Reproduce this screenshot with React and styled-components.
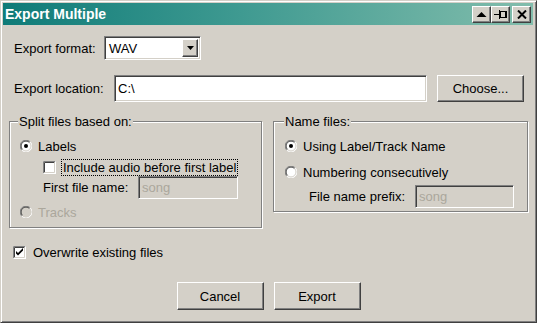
import React, { useState } from 'react';
import styled, { createGlobalStyle, css } from 'styled-components';

const Global = createGlobalStyle`
  html, body {
    margin: 0;
    padding: 0;
    background: #d4d0c8;
  }

  body {
    font-family: "Liberation Sans", Arial, sans-serif;
    font-size: 13px;
    color: #000;
  }
`

const raised = css`
  border: 1px solid;
  border-color: #fff #404040 #404040 #fff;
  box-shadow: inset -1px -1px #808080;
  background: #d4d0c8;
`

const sunken = css`
  border: 1px solid;
  border-color: #808080 #fff #fff #808080;
  box-shadow: inset 1px 1px #404040, inset -1px -1px #d4d0c8;
`

const Window = styled.div`
  width: 537px;
  height: 323px;
  box-sizing: border-box;
  display: flex;
  flex-direction: column;

  padding: 2px 3px 2px 2px;

  border: 1px solid;
  border-color: #d4d0c8 #404040 #404040 #d4d0c8;
  box-shadow: inset 1px 1px #fff, inset -1px -1px #808080;
  background: #d4d0c8;
`

const TitleBar = styled.div`
  height: 22px;
  display: flex;
  align-items: center;
  padding: 0 2px 0 2px;

  background: linear-gradient(90deg, #0f7b78 0%, #3f9a91 45%, #82bdac 100%);
  color: #fff;
  font-size: 14px;
  font-weight: bold;
`

const Title = styled.div`
  flex: 1;
`

const CaptionButton = styled.div`
  ${raised}
  box-sizing: border-box;
  width: 19px;
  height: 17px;
  display: flex;
  align-items: center;
  justify-content: center;
  margin-left: ${p => p.gap || 0}px;
`

const Body = styled.div`
  display: flex;
  flex-direction: column;
  padding: 0 5px 0 6px;
`

const Row = styled.div`
  display: flex;
  align-items: center;
  height: ${p => p.h || 20}px;
  margin-top: ${p => p.mt || 0}px;
  padding-left: ${p => p.pl || 0}px;
  padding-right: ${p => p.pr || 0}px;
  white-space: nowrap;
  color: ${p => (p.disabled ? '#aba79c' : '#000')};
`

const Label = styled.span`
  display: inline-block;
  width: ${p => (p.w ? `${p.w}px` : 'auto')};
  flex: none;
`

const Select = styled.div`
  ${sunken}
  box-sizing: border-box;
  width: 97px;
  height: 24px;
  display: flex;
  align-items: center;
  padding: 2px;
  background: #fff;
`

const SelectValue = styled.div`
  flex: 1;
  padding-left: 2px;
`

const SelectArrow = styled.div`
  ${raised}
  box-sizing: border-box;
  width: 16px;
  height: 100%;
  display: flex;
  align-items: center;
  justify-content: center;
`

const TextBox = styled.div`
  ${sunken}
  box-sizing: border-box;
  height: ${p => p.h || 23}px;
  width: ${p => (p.w ? `${p.w}px` : 'auto')};
  flex: ${p => (p.w ? 'none' : 1)};
  display: flex;
  align-items: center;
  padding-left: 3px;
  background: ${p => (p.disabled ? '#d4d0c8' : '#fff')};
  color: ${p => (p.disabled ? '#aba79c' : '#000')};
`

const Button = styled.button`
  ${raised}
  box-sizing: border-box;
  width: 87px;
  height: ${p => p.h || 28}px;
  margin-left: ${p => p.ml || 0}px;
  padding: 0;
  font: inherit;
  color: #000;
`

const GroupRow = styled.div`
  display: flex;
  align-items: flex-start;
  gap: 11px;
  margin-top: 19px;
`

const Group = styled.div`
  display: flex;
  flex-direction: column;
  width: ${p => (p.w ? `${p.w}px` : 'auto')};
  flex: ${p => (p.w ? 'none' : 1)};
  padding-bottom: ${p => p.pb || 0}px;

  border: 1px solid #808080;
  box-shadow: inset 1px 1px #fff, 1px 1px #fff;
`

const Legend = styled.div`
  align-self: flex-start;
  margin: -8px 0 0 ${p => p.ml || 8}px;
  padding: 0 1px;
  line-height: 15px;
  background: #d4d0c8;
`

const Focus = styled.span`
  outline: 1px dotted #000;
  outline-offset: 0;
  padding: 0 1px;
  line-height: 15px;
`

const Gap = styled.span`
  display: inline-block;
  width: ${p => p.w}px;
  flex: none;
`

const ButtonRow = styled.div`
  display: flex;
  justify-content: center;
  gap: 10px;
  margin-top: 20px;
`

const Radio = ({ checked, disabled }) => (
  <svg width="12" height="12" viewBox="0 0 12 12" style={{ flex: 'none' }}>
    <circle cx="6" cy="6" r="5.5" fill={disabled ? '#d4d0c8' : '#fff'} stroke="none" />
    <path d="M1.8 10.2 A5.5 5.5 0 0 1 10.2 1.8" fill="none" stroke="#808080" />
    <path d="M10.2 1.8 A5.5 5.5 0 0 1 1.8 10.2" fill="none" stroke="#fff" />
    <path d="M2.5 9.5 A4.5 4.5 0 0 1 9.5 2.5" fill="none" stroke="#404040" />
    <path d="M9.5 2.5 A4.5 4.5 0 0 1 2.5 9.5" fill="none" stroke="#d4d0c8" />
    {checked && <circle cx="6" cy="6" r="2" fill="#000" />}
  </svg>
)

const Check = ({ checked }) => (
  <svg width="13" height="13" viewBox="0 0 13 13" style={{ flex: 'none' }}>
    <rect x="0" y="0" width="13" height="13" fill="#fff" />
    <path d="M0.5 12.5 V0.5 H12.5" fill="none" stroke="#808080" />
    <path d="M1.5 11.5 V1.5 H11.5" fill="none" stroke="#404040" />
    <path d="M0.5 12.5 H12.5 V0.5" fill="none" stroke="#fff" />
    <path d="M1.5 11.5 H11.5 V1.5" fill="none" stroke="#d4d0c8" />
    {checked && <path d="M3 5 v2.5 l2 2 l5 -5 v-2.5 l-5 5 z" fill="#000" />}
  </svg>
)

export default props => {
  const [ overwrite, setOverwrite ] = useState(true);
  const [ naming, setNaming ] = useState('label');

  return (
    <Window>
      <Global />
      <TitleBar>
        <Title>Export Multiple</Title>
        <CaptionButton>
          <svg width="11" height="7" viewBox="0 0 11 7">
            <polygon points="0.5,6 10.5,6 5.5,1" fill="#000" />
          </svg>
        </CaptionButton>
        <CaptionButton>
          <svg width="14" height="11" viewBox="0 0 14 11">
            <path d="M0 5.5 H5" stroke="#000" />
            <rect x="5" y="1" width="1" height="9" fill="#000" />
            <rect x="6.5" y="2.5" width="6" height="6" fill="none" stroke="#000" />
            <rect x="11" y="2" width="2" height="7" fill="#000" />
          </svg>
        </CaptionButton>
        <CaptionButton gap={2}>
          <svg width="10" height="9" viewBox="0 0 10 9">
            <path d="M1 0.5 L9 8.5 M9 0.5 L1 8.5" stroke="#000" strokeWidth="2" />
          </svg>
        </CaptionButton>
      </TitleBar>

      <Body>
        <Row h={24} mt={11} pl={5}>
          <Label w={90}>Export format:</Label>
          <Select>
            <SelectValue>WAV</SelectValue>
            <SelectArrow>
              <svg width="7" height="4" viewBox="0 0 7 4">
                <polygon points="0,0 7,0 3.5,4" fill="#000" />
              </svg>
            </SelectArrow>
          </Select>
        </Row>

        <Row h={27} mt={15} pl={5} pr={4}>
          <Label w={100}>Export location:</Label>
          <TextBox h={27}>C:\</TextBox>
          <Button h={27} ml={10}>Choose...</Button>
        </Row>

        <GroupRow>
          <Group w={251} pb={5}>
            <Legend ml={8}>Split files based on:</Legend>
            <Row mt={7} pl={10}>
              <Radio checked />
              <Gap w={6} />
              Labels
            </Row>
            <Row h={18} mt={2} pl={33}>
              <Check />
              <Gap w={6} />
              <Focus>Include audio before first label</Focus>
            </Row>
            <Row h={23} pl={33}>
              <Label w={95}>First file name:</Label>
              <TextBox w={100} disabled>song</TextBox>
            </Row>
            <Row mt={3} pl={10} disabled>
              <Radio disabled />
              <Gap w={6} />
              Tracks
            </Row>
          </Group>

          <Group pb={3}>
            <Legend ml={10}>Name files:</Legend>
            <Row mt={7} pl={11} onClick={ _ => setNaming('label') }>
              <Radio checked={naming === 'label'} />
              <Gap w={6} />
              Using Label/Track Name
            </Row>
            <Row mt={6} pl={11} onClick={ _ => setNaming('number') }>
              <Radio checked={naming === 'number'} />
              <Gap w={6} />
              Numbering consecutively
            </Row>
            <Row h={23} mt={3} pl={35}>
              <Label w={106}>File name prefix:</Label>
              <TextBox w={99} disabled>song</TextBox>
            </Row>
          </Group>
        </GroupRow>

        <Row mt={14} pl={4} onClick={ _ => setOverwrite(!overwrite) }>
          <Check checked={overwrite} />
          <Gap w={7} />
          Overwrite existing files
        </Row>

        <ButtonRow>
          <Button>Cancel</Button>
          <Button>Export</Button>
        </ButtonRow>
      </Body>
    </Window>
  );
}
